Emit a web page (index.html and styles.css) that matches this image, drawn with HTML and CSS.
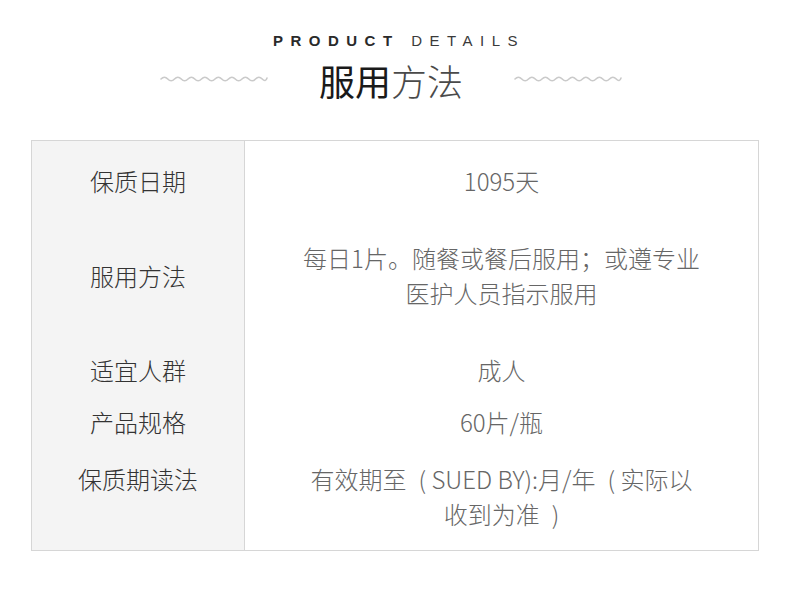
FILE: index.html
```html
<!DOCTYPE html>
<html lang="zh-CN">
<head>
<meta charset="utf-8">
<title>服用方法</title>
<link rel="stylesheet" href="styles.css">
</head>
<body>
<header class="head">
  <div class="eyebrow"><b>PRODUCT</b> DETAILS</div>
  <div class="title-row">
    <svg class="wave" width="108" height="8" viewBox="0 0 108 8"><path d="M1 4 Q4.4 0.5 7.75 4 T14.5 4 T21.25 4 T28 4 T34.75 4 T41.5 4 T48.25 4 T55 4 T61.75 4 T68.5 4 T75.25 4 T82 4 T88.75 4 T95.5 4 T102.25 4 T107 3" fill="none" stroke="#cacaca" stroke-width="1.6" stroke-linecap="round"/></svg>
    <h1 class="title"><span class="strong">服用</span><span class="light">方法</span></h1>
    <svg class="wave" width="108" height="8" viewBox="0 0 108 8"><path d="M1 4 Q4.4 0.5 7.75 4 T14.5 4 T21.25 4 T28 4 T34.75 4 T41.5 4 T48.25 4 T55 4 T61.75 4 T68.5 4 T75.25 4 T82 4 T88.75 4 T95.5 4 T102.25 4 T107 3" fill="none" stroke="#cacaca" stroke-width="1.6" stroke-linecap="round"/></svg>
  </div>
</header>
<section class="table">
  <div class="row r1"><div class="key">保质日期</div><div class="val">1095天</div></div>
  <div class="row r2"><div class="key">服用方法</div><div class="val">每日1片。随餐或餐后服用；或遵专业医护人员指示服用</div></div>
  <div class="row r3"><div class="key">适宜人群</div><div class="val">成人</div></div>
  <div class="row r4"><div class="key">产品规格</div><div class="val">60片/瓶</div></div>
  <div class="row r5 top"><div class="key">保质期读法</div><div class="val">有效期至&ensp;(&nbsp;SUED BY):月/年&ensp;(&nbsp;实际以收到为准&ensp;)</div></div>
</section>
</body>
</html>
```
FILE: styles.css
```css
* { box-sizing: border-box; }
html, body { margin: 0; padding: 0; background: #fff; }
body {
  width: 790px;
  height: 606px;
  font-family: "Noto Sans CJK SC", "Noto Sans", sans-serif;
  overflow: hidden;
}
.head {
  padding-top: 33px;
  display: flex;
  flex-direction: column;
  align-items: center;
}
.eyebrow {
  font-family: "Liberation Sans", Arial, sans-serif;
  font-size: 15px;
  line-height: 16px;
  letter-spacing: 7.5px;
  color: #3a3a3a;
  margin-left: 8px;
}
.eyebrow b { color: #2a2a2a; font-weight: 700; }
.title-row {
  margin-top: 6px;
  display: flex;
  align-items: center;
  gap: 51px;
  margin-right: 8px;
}
.wave { display: block; margin-top: -3px; }
.title {
  margin: 0;
  font-size: 36px;
  line-height: 50px;
  font-weight: 400;
  letter-spacing: 0;
}
.title .strong { color: #1a1a1a; font-weight: 400; }
.title .light { color: #4a4a4a; font-weight: 200; }

.table {
  margin: 35px 0 0 31px;
  width: 728px;
  border: 1px solid #d6d6d6;
  background: linear-gradient(to right, #f4f4f4 0, #f4f4f4 212px, #d6d6d6 212px, #d6d6d6 213px, #fff 213px);
}
.row {
  display: grid;
  grid-template-columns: 213px 1fr;
  align-items: center;
  font-size: 24px;
  line-height: 35px;
}
.row.top { align-items: start; }
.key { text-align: center; color: #333; padding-right: 1px; font-weight: 300; }
.val {
  color: #666;
  text-align: center;
  justify-self: center;
  max-width: 404px;
  font-weight: 300;
}
.r1 { padding: 22px 0 21px; }
.r2 { padding: 21px 0 21px; }
.r3 { padding: 21px 0 8px; }
.r4 { padding: 9px 0 11px; }
.r5 { padding: 11px 0 19px; }
```
